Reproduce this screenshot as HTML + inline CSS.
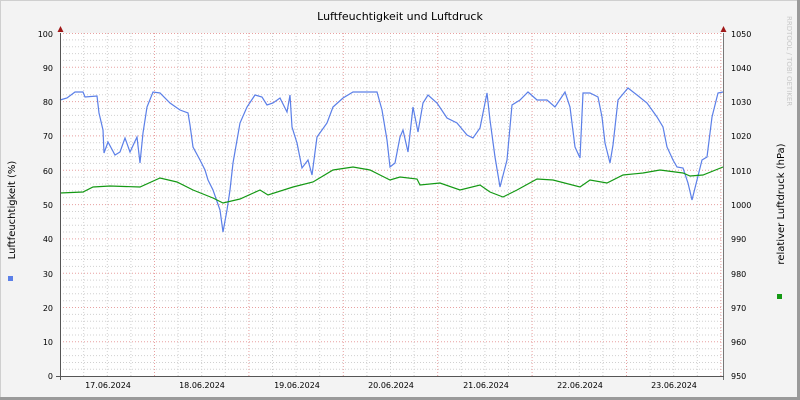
<!DOCTYPE html><html><head><style>body{margin:0;background:#f3f3f3}svg{display:block}text{font-family:"DejaVu Sans","Liberation Sans",sans-serif}</style></head><body>
<svg width="800" height="400" xmlns="http://www.w3.org/2000/svg">
<rect x="0" y="0" width="800" height="400" fill="#f3f3f3"/>
<rect x="0.5" y="0.5" width="799" height="399" fill="none" stroke="#cfcfcf"/>
<line x1="0" y1="398.5" x2="800" y2="398.5" stroke="#9a9a9a" stroke-width="3"/>
<line x1="798.5" y1="0" x2="798.5" y2="400" stroke="#9a9a9a" stroke-width="3"/>
<rect x="60" y="33" width="664" height="343" fill="#fff"/>
<g stroke="#d0d0d0" stroke-dasharray="1,2" stroke-width="1">
<path d="M60 39.9H724M60 46.7H724M60 53.6H724M60 60.4H724M60 74.2H724M60 81H724M60 87.9H724M60 94.8H724M60 108.5H724M60 115.4H724M60 122.2H724M60 129.1H724M60 142.8H724M60 149.7H724M60 156.6H724M60 163.4H724M60 177.1H724M60 184H724M60 190.9H724M60 197.7H724M60 211.5H724M60 218.3H724M60 225.2H724M60 232H724M60 245.8H724M60 252.6H724M60 259.5H724M60 266.4H724M60 280.1H724M60 287H724M60 293.8H724M60 300.7H724M60 314.4H724M60 321.3H724M60 328.1H724M60 335H724M60 348.7H724M60 355.6H724M60 362.5H724M60 369.3H724"/>
<path d="M83.7 33V376M107.3 33V376M130.9 33V376M178.1 33V376M201.7 33V376M225.3 33V376M272.5 33V376M296.1 33V376M319.7 33V376M366.9 33V376M390.5 33V376M414.1 33V376M461.3 33V376M484.9 33V376M508.5 33V376M555.7 33V376M579.3 33V376M602.9 33V376M650.1 33V376M673.7 33V376M697.3 33V376"/>
</g>
<g stroke="#e8a0a0" stroke-dasharray="1,2" stroke-width="1">
<path d="M60 33.5H724M60 67.3H724M60 101.6H724M60 135.9H724M60 170.2H724M60 204.6H724M60 238.9H724M60 273.2H724M60 307.5H724M60 341.8H724"/>
<path d="M154.5 33V376M248.9 33V376M343.3 33V376M437.7 33V376M532.1 33V376M626.5 33V376M720.9 33V376"/>
</g>
<polyline fill="none" stroke="#5b7fe8" stroke-width="1.2" points="60,100 67,98 75,92 83,92 85,97 97,96 99,113 103,130 104,153 108,142 115,155 120,152 125,138 130,152 137,137 140,163 143,133 147,107 153,92 160,93 170,103 180,110 188,113 190,125 193,147 200,160 205,170 208,180 213,190 220,210 223,232 227,210 230,190 233,163 240,123 247,107 255,95 262,97 267,105 273,103 280,98 287,112 290,95 292,127 297,143 302,168 308,160 312,175 317,137 327,123 333,107 343,98 353,92 377,92 382,110 387,140 390,167 395,163 400,137 403,130 408,152 413,107 418,132 423,103 428,95 437,103 447,118 457,123 467,135 473,138 480,128 487,93 490,120 495,157 500,187 507,160 512,105 520,100 528,92 537,100 547,100 555,107 565,92 570,107 575,147 580,158 583,93 590,93 598,97 602,117 605,143 610,163 613,145 618,100 628,88 637,95 647,103 657,117 663,127 667,147 673,160 677,167 683,168 688,183 692,200 697,180 702,160 707,157 712,117 718,93 723,92"/>
<polyline fill="none" stroke="#149914" stroke-width="1.2" points="60,193 83,192 93,187 110,186 140,187 160,178 177,182 193,190 213,198 223,203 240,199 260,190 268,195 293,187 313,182 333,170 353,167 370,170 390,180 400,177 417,179 420,185 440,183 460,190 480,185 490,192 503,197 517,190 537,179 553,180 580,187 590,180 607,183 623,175 643,173 660,170 683,173 690,176 703,175 723,167"/>
<line x1="60.5" y1="33" x2="60.5" y2="380" stroke="#555"/>
<line x1="723.5" y1="33" x2="723.5" y2="380" stroke="#777"/>
<line x1="56" y1="376.5" x2="724" y2="376.5" stroke="#555"/>
<polygon points="57.5,32 63.5,32 60.5,26" fill="#a01818"/>
<polygon points="720.5,32 726.5,32 723.5,26" fill="#a01818"/>
<g font-size="8" fill="#000" text-anchor="end">
<text x="53" y="37">100</text><text x="53" y="71">90</text><text x="53" y="105">80</text><text x="53" y="139">70</text><text x="53" y="174">60</text><text x="53" y="208">50</text><text x="53" y="242">40</text><text x="53" y="277">30</text><text x="53" y="311">20</text><text x="53" y="345">10</text><text x="53" y="379">0</text>
</g>
<g font-size="8" fill="#000">
<text x="731" y="37">1050</text><text x="731" y="71">1040</text><text x="731" y="105">1030</text><text x="731" y="139">1020</text><text x="731" y="174">1010</text><text x="731" y="208">1000</text><text x="731" y="242">990</text><text x="731" y="277">980</text><text x="731" y="311">970</text><text x="731" y="345">960</text><text x="731" y="379">950</text>
</g>
<g font-size="8" fill="#000" text-anchor="middle">
<text x="108" y="388">17.06.2024</text><text x="202" y="388">18.06.2024</text><text x="297" y="388">19.06.2024</text><text x="391" y="388">20.06.2024</text><text x="486" y="388">21.06.2024</text><text x="580" y="388">22.06.2024</text><text x="674" y="388">23.06.2024</text>
</g>
<text x="400" y="20" font-size="11" text-anchor="middle" fill="#000">Luftfeuchtigkeit und Luftdruck</text>
<text transform="translate(15,210) rotate(-90)" font-size="10" text-anchor="middle" fill="#000">Luftfeuchtigkeit (%)</text>
<text transform="translate(784,204) rotate(-90)" font-size="10" text-anchor="middle" fill="#000">relativer Luftdruck (hPa)</text>
<text transform="translate(787,16) rotate(90)" font-size="7" fill="#c8c8c8">RRDTOOL / TOBI OETIKER</text>
<rect x="8" y="276" width="5" height="5" fill="#5b7fe8"/>
<rect x="777" y="294" width="5" height="5" fill="#149914"/>
</svg></body></html>
